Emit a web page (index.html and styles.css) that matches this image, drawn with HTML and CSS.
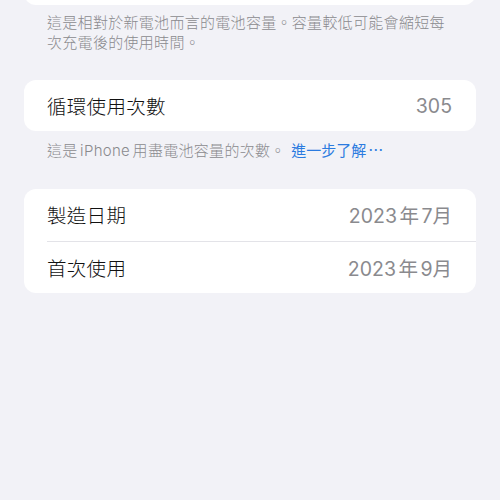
FILE: index.html
```html
<!DOCTYPE html>
<html lang="zh-Hant">
<head>
<meta charset="utf-8">
<link rel="stylesheet" href="styles.css">
</head>
<body>
<div class="page">
  <div class="card card-top"></div>
  <p class="footer">這是相對於新電池而言的電池容量。容量較低可能會縮短每次充電後的使用時間。</p>

  <div class="card card-gap">
    <div class="row">
      <span class="label">循環使用次數</span>
      <span class="value">305</span>
    </div>
  </div>
  <p class="footer footer-one">這是 iPhone 用盡電池容量的次數。 <a class="link">進一步了解 ⋯</a></p>

  <div class="card card-gap">
    <div class="row row-first">
      <span class="label">製造日期</span>
      <span class="value">2023 年 7月</span>
    </div>
    <div class="row row-sep">
      <span class="label">首次使用</span>
      <span class="value">2023 年 9月</span>
    </div>
  </div>
</div>
</body>
</html>
```

FILE: styles.css
```css
html, body {
  margin: 0;
  padding: 0;
  background: #f2f2f7;
}

body {
  font-family: Inter, "Noto Sans CJK TC", "Noto Sans", sans-serif;
  color: #000;
  overflow: hidden;
}

.page {
  padding: 0 24px;
}

.card {
  background: #fff;
  border-radius: 12px;
}

.card-top {
  height: 45px;
  margin-top: -40px;
}

.card-gap {
  margin-top: 28px;
}

.footer {
  margin: 0;
  padding: 8px 30px 0 23px;
  font-size: 15px;
  line-height: 19.5px;
  letter-spacing: 0.3px;
  color: #8a8a8e;
  font-weight: 300;
}

.footer-one {
  padding-top: 10px;
  word-spacing: -2px;
}

.link {
  color: #2b7be0;
  margin-left: 3px;
  font-weight: 400;
  letter-spacing: 0;
}

.row {
  height: 51px;
  display: flex;
  align-items: center;
  justify-content: space-between;
  padding: 0 24px 0 23px;
}

.row-first {
  height: 52px;
}

.row-sep {
  margin-left: 23px;
  padding-left: 0;
  border-top: 1px solid #e3e3e8;
}

.label {
  font-size: 19.5px;
  letter-spacing: 0.3px;
  font-weight: 300;
  color: #111;
}

.value {
  font-size: 19.5px;
  color: #8a8a8e;
  word-spacing: -3px;
  font-weight: 400;
}
```
